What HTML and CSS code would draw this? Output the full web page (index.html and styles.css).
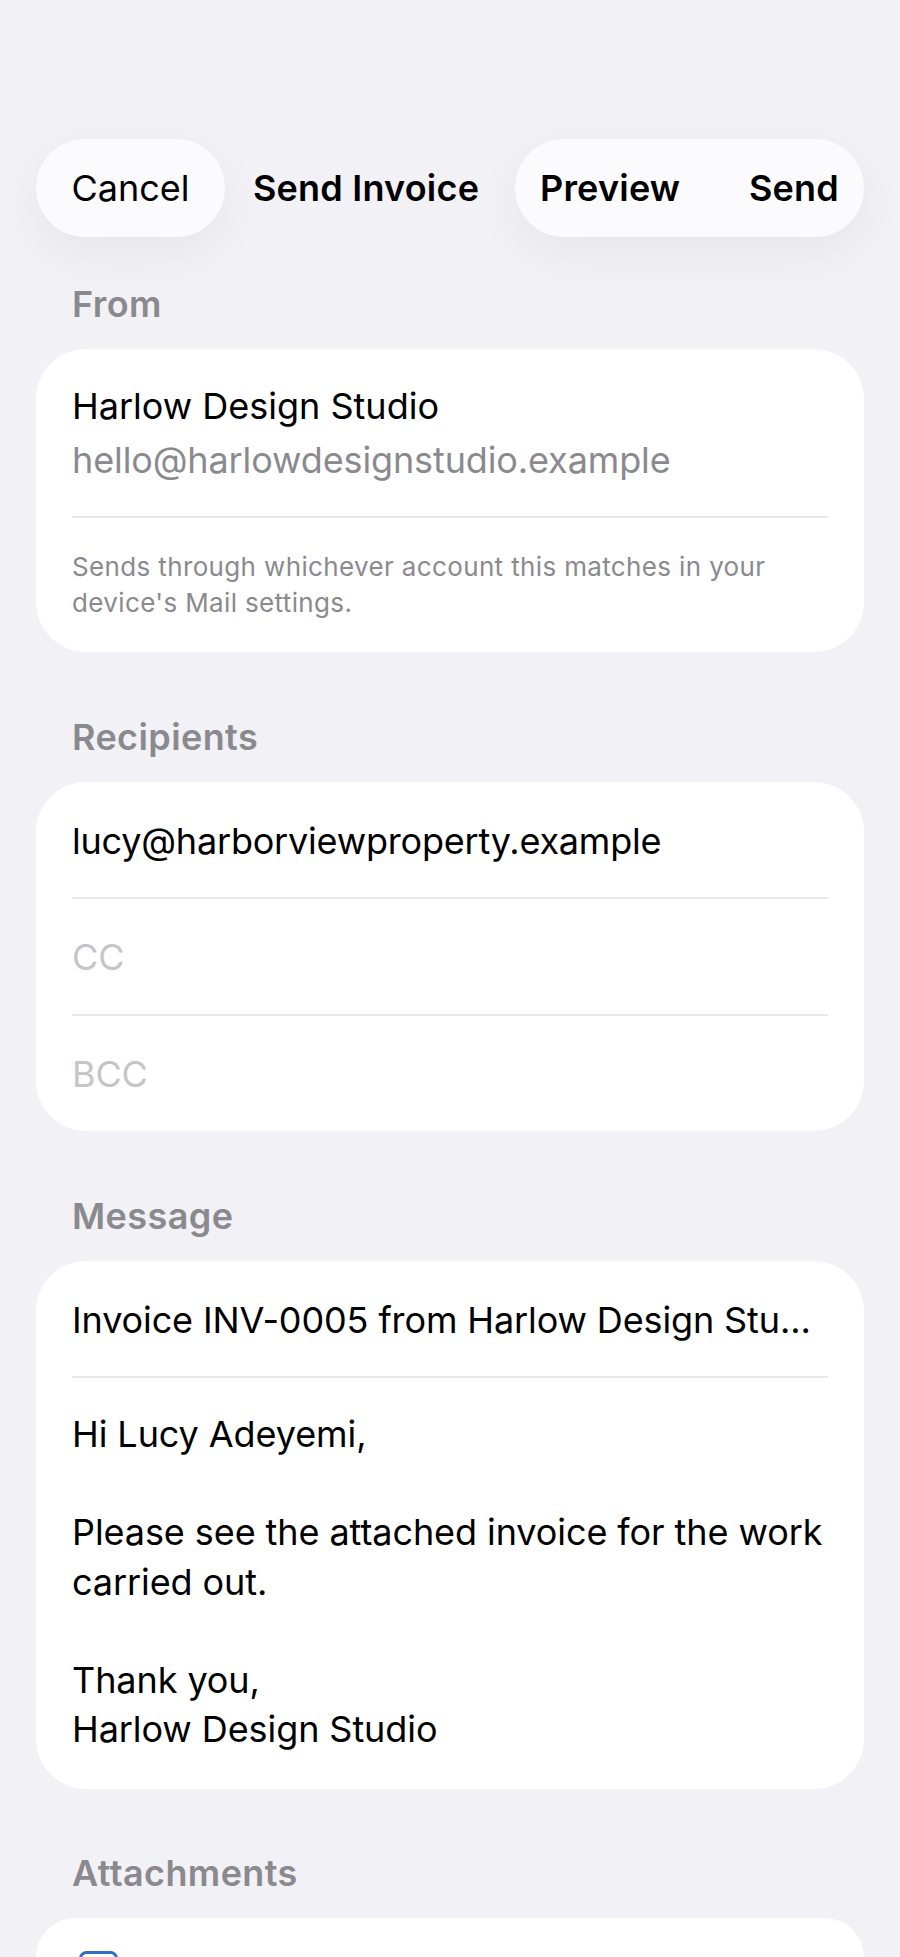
FILE: index.html
```html
<!DOCTYPE html>
<html lang="en">

<head>
    <meta charset="UTF-8">
    <meta name="viewport" content="width=device-width, initial-scale=1.0">
    <title>Send Invoice</title>
    <link rel="stylesheet" href="styles.css">
</head>

<body>
    <header class="topbar">
        <button type="button" class="pill cancel-pill">Cancel</button>
        <h1 class="page-title">Send Invoice</h1>
        <div class="pill action-pill">
            <button type="button" class="action-btn">Preview</button>
            <button type="button" class="action-btn">Send</button>
        </div>
    </header>

    <main id="content">
        <section class="group group-from">
            <h2 class="group-label">From</h2>
            <div class="card">
                <div class="from-details">
                    <div class="row-text from-name">Harlow Design Studio</div>
                    <div class="row-text muted">hello@harlowdesignstudio.example</div>
                </div>
                <hr class="divider">
                <p class="hint">Sends through whichever account this matches in your device's Mail settings.</p>
            </div>
        </section>

        <section class="group">
            <h2 class="group-label">Recipients</h2>
            <div class="card">
                <div class="field row-text recipient">lucy@harborviewproperty.example</div>
                <hr class="divider">
                <div class="field row-text placeholder">CC</div>
                <hr class="divider">
                <div class="field row-text placeholder">BCC</div>
            </div>
        </section>

        <section class="group">
            <h2 class="group-label">Message</h2>
            <div class="card">
                <div class="field row-text">Invoice INV-0005 from Harlow Design Stu...</div>
                <hr class="divider">
                <div class="message-body">
                    <p>Hi Lucy Adeyemi,</p>
                    <p>Please see the attached invoice for the work carried out.</p>
                    <p>Thank you,<br>Harlow Design Studio</p>
                </div>
            </div>
        </section>

        <section class="group group-attachments">
            <h2 class="group-label">Attachments</h2>
            <div class="card attachment-card">
                <svg class="doc-icon" width="39" height="50" viewBox="0 0 39 50" fill="none">
                    <rect x="1.5" y="1.5" width="36" height="47" rx="6" stroke="#2f6fc4" stroke-width="3" />
                </svg>
            </div>
        </section>
    </main>
</body>

</html>
```

FILE: styles.css
```css
html,
body {
    height: 100%;
    overflow: hidden;
}

body {
    margin: 0;
    background-color: #f1f1f6;
    color: #000;
    font-family: Inter, "Liberation Sans", sans-serif;
}

button {
    font-family: inherit;
    color: inherit;
    background: none;
    border: none;
    padding: 0;
}

.topbar {
    display: flex;
    align-items: center;
    padding: 139px 36px 0;
}

.pill {
    height: 98px;
    border-radius: 49px;
    background-color: #fbfbfe;
    box-shadow: 0 16px 50px rgba(0, 0, 0, 0.05);
}

.cancel-pill {
    width: 189px;
    font-size: 36px;
}

.page-title {
    margin: 0 0 0 28px;
    font-size: 36px;
    font-weight: 600;
    letter-spacing: 0.2px;
}

.action-pill {
    display: flex;
    align-items: center;
    justify-content: space-between;
    width: 349px;
    margin-left: auto;
    padding: 0 25px;
    box-sizing: border-box;
}

.action-btn {
    font-size: 36px;
    font-weight: 600;
    letter-spacing: 0.2px;
}

.group {
    margin-top: 63px;
}

.group-from {
    margin-top: 45px;
}

.group-attachments {
    margin-top: 62px;
}

.group-label {
    margin: 0 0 23px 72px;
    font-size: 36px;
    line-height: 44px;
    font-weight: 600;
    letter-spacing: 0.4px;
    color: #8a8a8e;
}

.card {
    margin: 0 36px;
    padding: 0 36px;
    background-color: #fff;
    border-radius: 50px;
}

.divider {
    margin: 0;
    border: none;
    height: 2px;
    background-color: #e9e9ed;
}

.row-text {
    font-size: 36px;
    line-height: 54px;
    letter-spacing: -0.12px;
}

.from-name {
    letter-spacing: 0;
}

.recipient {
    letter-spacing: -0.2px;
}

.muted {
    color: #8a8a8e;
}

.from-details {
    padding: 30px 0 29px;
}

.hint {
    margin: 0;
    padding: 31px 0;
    font-size: 26px;
    line-height: 36px;
    letter-spacing: 0.36px;
    color: #8a8a8e;
}

.field {
    padding: 32px 0 29px;
    white-space: nowrap;
}

.placeholder {
    padding: 31px 0 30px;
    color: #c5c5c9;
}

.message-body {
    padding: 32px 0 35px;
    font-size: 36px;
    line-height: 49.2px;
    letter-spacing: -0.08px;
}

.message-body p {
    margin: 0 0 49.2px;
}

.message-body p:last-child {
    margin-bottom: 0;
}

/* cut off by the bottom of the window */
.attachment-card {
    height: 39px;
    padding-top: 33px;
    box-sizing: border-box;
    border-radius: 50px 50px 0 0;
    overflow: hidden;
}

.doc-icon {
    display: block;
    margin-left: 7px;
}
```
